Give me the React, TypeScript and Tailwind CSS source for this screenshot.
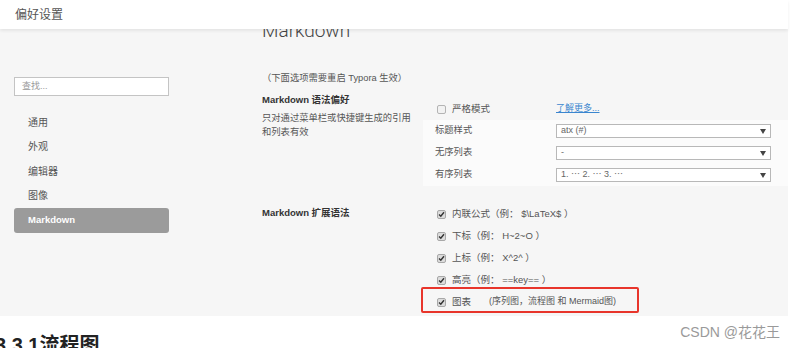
import React from 'react';

const font = "font-['Liberation_Sans','Noto_Sans_CJK_SC',sans-serif]";

const Check: React.FC<{ checked?: boolean }> = ({ checked }) => (
  <span
    className={
      checked
        ? 'flex h-[9px] w-[9px] items-center justify-center rounded-[2px] border border-[#a8a8a8] bg-[#dcdcdc]'
        : 'flex h-[9px] w-[9px] items-center justify-center rounded-[2px] border border-[#b4b4b4] bg-[#f2f2f2]'
    }
  >
    {checked && (
      <svg width="7" height="7" viewBox="0 0 7 7">
        <path d="M1 3.6 L2.8 5.3 L6 1.2" fill="none" stroke="#333" strokeWidth="1.4" />
      </svg>
    )}
  </span>
);

const Select: React.FC<{ value: string }> = ({ value }) => (
  <div className="flex h-[14px] w-[215px] items-center justify-between border border-[#b8b8b8] bg-white pl-[4px] pr-[4px] text-[9px] text-[#666]">
    <span>{value}</span>
    <svg width="6" height="5" viewBox="0 0 6 5">
      <path d="M0 0 H6 L3 5 Z" fill="#444" />
    </svg>
  </div>
);

const App: React.FC = () => {
  const nav = ['通用', '外观', '编辑器', '图像'];
  const selects = [
    { label: '标题样式', value: 'atx (#)' },
    { label: '无序列表', value: '-' },
    { label: '有序列表', value: '1. ⋯ 2. ⋯ 3. ⋯' },
  ];
  const exts = [
    '内联公式（例： $\\LaTeX$ ）',
    '下标（例： H~2~O ）',
    '上标（例： X^2^ ）',
    '高亮（例： ==key== ）',
  ];

  return (
    <div className={`relative h-[348px] w-[795px] overflow-hidden bg-white ${font}`}>
      <div className="w-[788px]">
        {/* header */}
        <div className="relative z-10 flex h-[29px] items-center bg-white pl-[15px] text-[12px] text-[#555] shadow-[0_2px_3px_rgba(0,0,0,0.07)]">
          偏好设置
        </div>

        {/* panel */}
        <div className="flex h-[287px] overflow-hidden bg-[#f6f6f6]">
          {/* sidebar */}
          <div className="w-[262px] shrink-0 pl-[14px]">
            <div className="mt-[48px] flex h-[19px] w-[155px] items-center border border-[#c4c4c4] bg-white pl-[7px] text-[9px] text-[#999]">
              查找...
            </div>
            <div className="mt-[14px] flex flex-col">
              {nav.map((n) => (
                <div key={n} className="flex h-[24.5px] w-[155px] items-center pl-[14px] text-[10px] text-[#555]">
                  {n}
                </div>
              ))}
              <div className="flex h-[24.5px] w-[155px] items-center rounded-[3px] bg-[#9b9b9b] pl-[14px] text-[9.5px] font-bold text-white">
                Markdown
              </div>
            </div>
          </div>

          {/* main */}
          <div className="flex-1">
            <div className="-mt-[8px] font-['Roboto',sans-serif] text-[19px] leading-[20px] font-light text-[#444]">
              Markdown
            </div>
            <div className="mt-[30px] text-[9.3px] leading-[14px] text-[#555]">
              （下面选项需要重启 Typora 生效）
            </div>

            {/* section 1 */}
            <div className="mt-[7px] grid grid-cols-[161px_1fr]">
              <div>
                <div className="text-[9.5px] leading-[16px] font-bold text-[#333]">Markdown 语法偏好</div>
                <div className="mt-[3px] w-[155px] text-[9.3px] leading-[14px] text-[#555]">
                  只对通过菜单栏或快捷键生成的引用和列表有效
                </div>
              </div>
              <div className="pt-[6px]">
                <div className="flex h-[22px] items-center pl-[14px] text-[9.5px] text-[#555]">
                  <Check />
                  <span className="ml-[6px] w-[104px]">严格模式</span>
                  <span className="text-[9px] text-[#3a86cf] underline">了解更多...</span>
                </div>
                <div className="bg-[#fbfbfb]">
                  {selects.map((s) => (
                    <div key={s.label} className="flex h-[22px] items-center pl-[12px] text-[9.3px] text-[#555]">
                      <span className="w-[121px]">{s.label}</span>
                      <Select value={s.value} />
                    </div>
                  ))}
                </div>
              </div>
            </div>

            {/* section 2 */}
            <div className="mt-[17px] grid grid-cols-[161px_1fr]">
              <div className="pt-[2px] text-[9.5px] leading-[16px] font-bold text-[#333]">Markdown 扩展语法</div>
              <div className="pl-[14px]">
                {exts.map((e) => (
                  <div key={e} className="flex h-[22px] items-center text-[9.5px] text-[#555]">
                    <Check checked />
                    <span className="ml-[6px]">{e}</span>
                  </div>
                ))}
                <div className="relative flex h-[22px] items-center text-[9.5px] text-[#555]">
                  <Check checked />
                  <span className="ml-[6px] w-[37px]">图表</span>
                  <span className="text-[9px]">(序列图，流程图 和 Mermaid图)</span>
                  <div className="absolute top-[-4px] left-[-16px] h-[26px] w-[218px] rounded-[2px] border-2 border-[#e8352b]" />
                </div>
              </div>
            </div>
          </div>
        </div>

        {/* below */}
        <div className="mt-[15px] -ml-[5px] text-[20px] leading-[28px] font-bold text-[#222]">3.3.1流程图</div>
      </div>

      <div className="absolute top-[323px] right-[15px] text-[14px] leading-[18px] text-[#9a9a9a]">CSDN @花花王</div>
    </div>
  );
};

export default App;
